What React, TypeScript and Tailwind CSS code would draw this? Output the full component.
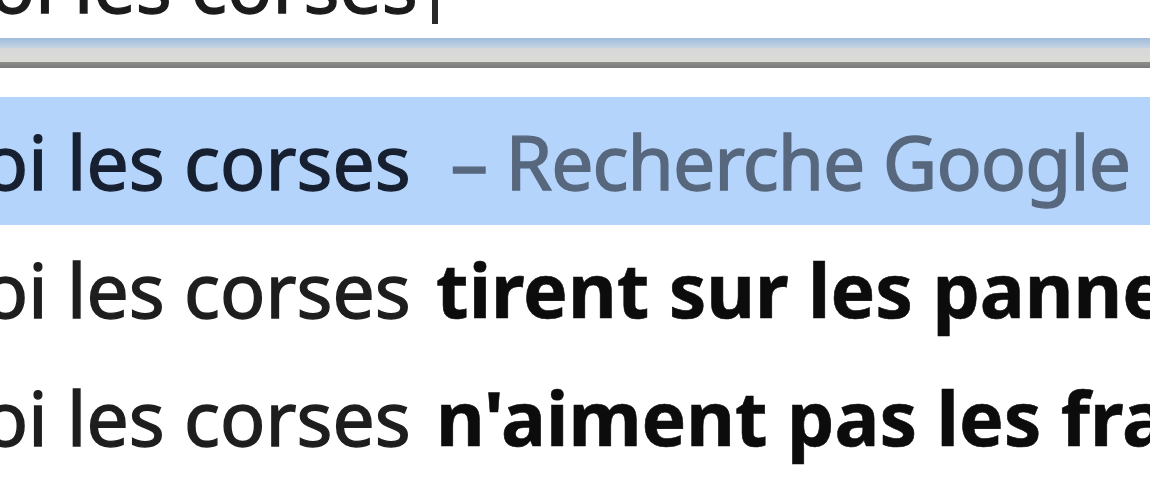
import React from 'react';

const rows = [
  { bold: 'tirent sur les panneaux' },
  { bold: "n'aiment pas les français" },
  { bold: 'sont indépendantistes' },
];

function App() {
  return (
    <div className="w-[1150px] h-[495px] overflow-hidden bg-white text-[75px] font-['Noto_Sans',sans-serif] [-webkit-text-stroke:1.4px_currentColor]">
      <div className="h-[38px] overflow-hidden">
        <div className="-mt-[80px] leading-[128px] whitespace-nowrap text-[#1b1b1b] -ml-[270px] flex items-center">
          <span>pourquoi les corses</span>
          <span className="inline-block w-[6px] h-[84px] bg-[#2a2a2a] ml-[14px] mt-[-4px]" />
        </div>
      </div>
      <div className="h-[10px] bg-gradient-to-b from-[#9fbbdb] to-[#c6d4e2]" />
      <div className="h-[14px] bg-gradient-to-b from-[#d6d8d8] to-[#dcdbd6]" />
      <div className="h-[6px] bg-gradient-to-b from-[#8d8d8b] to-[#7a7a7a]" />
      <div className="h-[29px] bg-white" />
      <ul>
        <li className="h-[128px] leading-[128px] bg-[#b5d4fb] whitespace-nowrap -ml-[277px] text-[#172031]">
          pourquoi les corses
          <span className="ml-[40px] tracking-[-1px] text-[#57677d]">– Recherche Google</span>
        </li>
        {rows.map((r) => (
          <li key={r.bold} className="h-[128px] leading-[128px] whitespace-nowrap -ml-[277px] text-[#1e1e1e]">
            pourquoi les corses <span className="ml-[6px] font-bold text-[#0c0c0c] [-webkit-text-stroke:0.6px_currentColor]">{r.bold}</span>
          </li>
        ))}
      </ul>
    </div>
  );
}

export default App;
